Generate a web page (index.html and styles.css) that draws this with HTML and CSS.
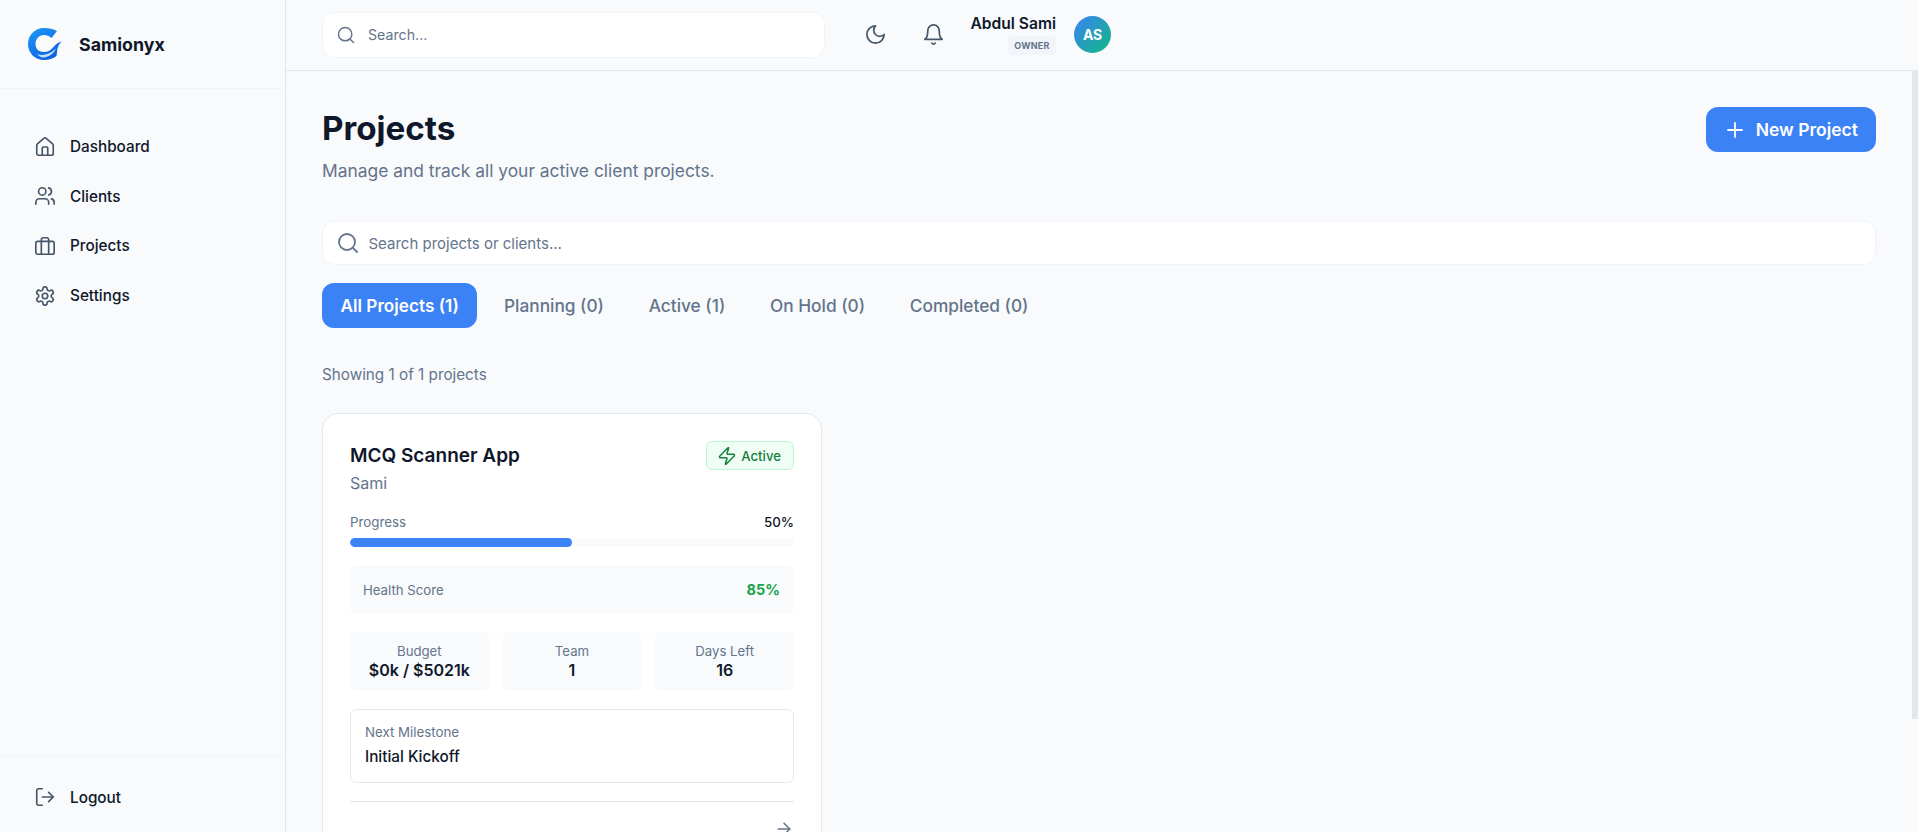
FILE: index.html
```html
<!DOCTYPE html>
<html lang="en">
<head>
    <meta charset="UTF-8">
    <title>Projects</title>
    <link rel="stylesheet" href="styles.css">
</head>
<body>
<div class="app">

    <aside class="sidebar">
        <div class="sidebar__brand">
            <svg class="sidebar__logo" viewBox="0 0 34 32" width="34" height="32">
                <defs>
                    <linearGradient id="logoGrad" x1="0" y1="0" x2="0.7" y2="1">
                        <stop offset="0" stop-color="#1e9bf5"/>
                        <stop offset="1" stop-color="#0b5fe0"/>
                    </linearGradient>
                </defs>
                <path fill="url(#logoGrad)" d="M16 0C21 0 25.500 1 29 3L23.500 10C21.500 8 19 7 16 7C11 7 7.500 11 7.500 16C7.500 21 11 24 15.500 24C20 24 23 22 25.500 19C28 16 30.500 14 34 13.500C31.500 15.500 30 18 29.500 20.500L28.500 28C25 30.500 21 32 16 32C7 32 0 25 0 16C0 7 7 0 16 0Z"/>
                <path fill="#bfe0fb" d="M9 26C15 28.500 22 26 28 20.500C25.500 26 20.500 29.500 15 29.500C13 29.500 11 28 9 26Z"/>
            </svg>
            <span class="sidebar__name">Samionyx</span>
        </div>

        <nav class="sidebar__nav">
            <a class="sidebar__link" href="#">
                <svg class="icon" viewBox="0 0 24 24"><path d="M15 21v-8a1 1 0 0 0-1-1h-4a1 1 0 0 0-1 1v8"/><path d="M3 10a2 2 0 0 1 .709-1.528l7-5.999a2 2 0 0 1 2.582 0l7 5.999A2 2 0 0 1 21 10v9a2 2 0 0 1-2 2H5a2 2 0 0 1-2-2z"/></svg>
                Dashboard
            </a>
            <a class="sidebar__link" href="#">
                <svg class="icon" viewBox="0 0 24 24"><path d="M16 21v-2a4 4 0 0 0-4-4H6a4 4 0 0 0-4 4v2"/><circle cx="9" cy="7" r="4"/><path d="M22 21v-2a4 4 0 0 0-3-3.870"/><path d="M16 3.130a4 4 0 0 1 0 7.750"/></svg>
                Clients
            </a>
            <a class="sidebar__link" href="#">
                <svg class="icon" viewBox="0 0 24 24"><rect x="2" y="7" width="20" height="14" rx="2"/><path d="M16 21V5a2 2 0 0 0-2-2h-4a2 2 0 0 0-2 2v16"/></svg>
                Projects
            </a>
            <a class="sidebar__link" href="#">
                <svg class="icon" viewBox="0 0 24 24"><path d="M12.220 2h-.440a2 2 0 0 0-2 2v.180a2 2 0 0 1-1 1.730l-.430.250a2 2 0 0 1-2 0l-.150-.080a2 2 0 0 0-2.730.730l-.220.380a2 2 0 0 0 .730 2.730l.150.100a2 2 0 0 1 1 1.720v.510a2 2 0 0 1-1 1.740l-.150.090a2 2 0 0 0-.730 2.730l.220.380a2 2 0 0 0 2.730.730l.150-.080a2 2 0 0 1 2 0l.430.250a2 2 0 0 1 1 1.730V20a2 2 0 0 0 2 2h.440a2 2 0 0 0 2-2v-.180a2 2 0 0 1 1-1.730l.430-.250a2 2 0 0 1 2 0l.150.080a2 2 0 0 0 2.730-.730l.220-.390a2 2 0 0 0-.730-2.730l-.150-.080a2 2 0 0 1-1-1.740v-.500a2 2 0 0 1 1-1.740l.150-.090a2 2 0 0 0 .730-2.730l-.220-.380a2 2 0 0 0-2.730-.730l-.150.080a2 2 0 0 1-2 0l-.430-.250a2 2 0 0 1-1-1.730V4a2 2 0 0 0-2-2z"/><circle cx="12" cy="12" r="3"/></svg>
                Settings
            </a>
        </nav>

        <div class="sidebar__footer">
            <a class="sidebar__link" href="#">
                <svg class="icon" viewBox="0 0 24 24"><path d="M9 21H5a2 2 0 0 1-2-2V5a2 2 0 0 1 2-2h4"/><path d="M16 17l5-5-5-5"/><path d="M21 12H9"/></svg>
                Logout
            </a>
        </div>
    </aside>

    <div class="content">
        <header class="topbar">
            <label class="searchbox searchbox--top">
                <svg class="icon" viewBox="0 0 24 24"><circle cx="11" cy="11" r="8"/><path d="M21 21l-4.300-4.300"/></svg>
                <input class="searchbox__input" type="text" placeholder="Search...">
            </label>

            <button class="topbar__btn" type="button">
                <svg class="icon" viewBox="0 0 24 24"><path d="M12 3a6 6 0 0 0 9 9 9 9 0 1 1-9-9Z"/></svg>
            </button>
            <button class="topbar__btn" type="button">
                <svg class="icon" viewBox="0 0 24 24"><path d="M6 8a6 6 0 0 1 12 0c0 7 3 9 3 9H3s3-2 3-9"/><path d="M10.300 21a1.940 1.940 0 0 0 3.400 0"/></svg>
            </button>

            <div class="user">
                <div class="user__info">
                    <span class="user__name">Abdul Sami</span>
                    <span class="user__role">OWNER</span>
                </div>
                <div class="user__avatar">AS</div>
            </div>
        </header>

        <main class="main">
            <div class="page-head">
                <div>
                    <h1 class="page-head__title">Projects</h1>
                    <p class="page-head__sub">Manage and track all your active client projects.</p>
                </div>
                <button class="page-head__btn" type="button">
                    <svg class="icon" viewBox="0 0 24 24"><path d="M5 12h14"/><path d="M12 5v14"/></svg>
                    New Project
                </button>
            </div>

            <label class="searchbox searchbox--main">
                <svg class="icon" viewBox="0 0 24 24"><circle cx="11" cy="11" r="8"/><path d="M21 21l-4.300-4.300"/></svg>
                <input class="searchbox__input" type="text" placeholder="Search projects or clients...">
            </label>

            <div class="tabs">
                <button class="tabs__item tabs__item--active" type="button">All Projects (1)</button>
                <button class="tabs__item" type="button">Planning (0)</button>
                <button class="tabs__item" type="button">Active (1)</button>
                <button class="tabs__item" type="button">On Hold (0)</button>
                <button class="tabs__item" type="button">Completed (0)</button>
            </div>

            <p class="showing">Showing 1 of 1 projects</p>

            <div class="cards">
                <article class="card">
                    <div class="card__head">
                        <div>
                            <h3 class="card__title">MCQ Scanner App</h3>
                            <p class="card__client">Sami</p>
                        </div>
                        <span class="card__status">
                            <svg class="icon" viewBox="0 0 24 24"><path d="M4 14a1 1 0 0 1-.780-1.630l9.900-10.200a.5.500 0 0 1 .860.460l-1.920 6.020A1 1 0 0 0 13 10h7a1 1 0 0 1 .780 1.630l-9.900 10.200a.5.500 0 0 1-.860-.460l1.920-6.020A1 1 0 0 0 11 14z"/></svg>
                            Active
                        </span>
                    </div>

                    <div class="progress">
                        <div class="progress__row">
                            <span class="progress__label">Progress</span>
                            <span class="progress__value">50%</span>
                        </div>
                        <div class="progress__track">
                            <div class="progress__fill" style="width: 50%"></div>
                        </div>
                    </div>

                    <div class="health">
                        <span class="health__label">Health Score</span>
                        <span class="health__value">85%</span>
                    </div>

                    <div class="stats">
                        <div class="stats__item">
                            <span class="stats__label">Budget</span>
                            <span class="stats__value">$0k / $5021k</span>
                        </div>
                        <div class="stats__item">
                            <span class="stats__label">Team</span>
                            <span class="stats__value">1</span>
                        </div>
                        <div class="stats__item">
                            <span class="stats__label">Days Left</span>
                            <span class="stats__value">16</span>
                        </div>
                    </div>

                    <div class="milestone">
                        <span class="milestone__label">Next Milestone</span>
                        <span class="milestone__value">Initial Kickoff</span>
                    </div>

                    <div class="card__foot">
                        <svg class="icon" viewBox="0 0 24 24"><path d="M5 12h14"/><path d="M12 5l7 7-7 7"/></svg>
                    </div>
                </article>
            </div>
        </main>

        <div class="scroll-thumb"></div>
    </div>

</div>
</body>
</html>
```

FILE: styles.css
```css
* {
    box-sizing: border-box;
}

html, body {
    height: 100%;
}

body {
    margin: 0;
    overflow: hidden;
    background-color: #f8fafc;
    color: #0f172a;
    font-family: Inter, "Noto Sans", sans-serif;
}

.app {
    display: flex;
    height: 100%;
}

.icon {
    display: block;
    flex: none;
    width: 20px;
    height: 20px;
    fill: none;
    stroke: currentColor;
    stroke-width: 1.8;
    stroke-linecap: round;
    stroke-linejoin: round;
}

/* sidebar */

.sidebar {
    display: flex;
    flex-direction: column;
    flex: none;
    width: 286px;
    border-right: 1px solid #e2e8f0;
}
.sidebar__brand {
    display: flex;
    align-items: center;
    gap: 17px;
    height: 89px;
    padding: 0 28px;
    border-bottom: 1px solid #f1f5f9;
}
.sidebar__logo {
    display: block;
    flex: none;
}
.sidebar__name {
    font-size: 17.800px;
    font-weight: 700;
}
.sidebar__nav {
    display: flex;
    flex-direction: column;
    flex: 1;
    gap: 9.700px;
    padding: 37.500px 21px 0;
}
.sidebar__link {
    display: flex;
    align-items: center;
    gap: 14px;
    height: 40px;
    padding: 0 13px;
    color: #0f172a;
    font-size: 15.300px;
    font-weight: 450;
    text-decoration: none;
}
.sidebar__link .icon {
    width: 22px;
    height: 22px;
    color: #475569;
}
.sidebar__footer {
    height: 76px;
    padding: 20px 21px 0;
    border-top: 1px solid #f1f5f9;
}

/* top bar */

.content {
    position: relative;
    display: flex;
    flex-direction: column;
    flex: 1;
    min-width: 0;
}
.topbar {
    display: flex;
    align-items: center;
    flex: none;
    height: 71px;
    padding: 0 36px 1px;
    border-bottom: 1px solid #e2e8f0;
}
.topbar__btn {
    display: flex;
    align-items: center;
    justify-content: center;
    width: 40px;
    height: 40px;
    margin-right: 18.500px;
    padding: 0;
    background: none;
    border: 0;
    color: #475569;
}
.topbar__btn .icon {
    width: 23px;
    height: 23px;
}
.user {
    display: flex;
    align-items: center;
    gap: 18px;
    margin-left: -1.500px;
}
.user__info {
    display: flex;
    flex-direction: column;
    align-items: flex-end;
    gap: 3px;
}
.user__name {
    font-size: 15.600px;
    font-weight: 600;
    line-height: 18px;
}
.user__role {
    height: 19px;
    padding: 0 6.500px;
    background-color: #f1f5f9;
    border-radius: 4px;
    color: #64748b;
    font-size: 9px;
    font-weight: 700;
    letter-spacing: 0.2px;
    line-height: 19px;
}
.user__avatar {
    display: flex;
    align-items: center;
    justify-content: center;
    width: 37px;
    height: 37px;
    background: linear-gradient(135deg, #3b82f6, #10b981);
    border-radius: 50%;
    color: #fff;
    font-size: 14px;
    font-weight: 700;
}

/* search boxes */

.searchbox {
    display: flex;
    align-items: center;
    background-color: #fff;
    border: 1px solid #f1f5f9;
    border-radius: 12px;
    color: #64748b;
}
.searchbox--top {
    gap: 12px;
    width: 503px;
    height: 46px;
    margin-right: 30px;
    padding: 0 13px;
}
.searchbox--top .searchbox__input {
    font-size: 14.200px;
}
.searchbox--main {
    gap: 8.500px;
    height: 44px;
    margin-bottom: 18px;
    padding: 0 13px;
}
.searchbox--main .icon {
    width: 24px;
    height: 24px;
}
.searchbox__input {
    flex: 1;
    min-width: 0;
    padding: 0;
    background: none;
    border: 0;
    color: #0f172a;
    font-family: inherit;
    font-size: 15px;
}
.searchbox__input::placeholder {
    color: #64748b;
    opacity: 1;
}
.searchbox__input:focus {
    outline: none;
}

/* main area */

.main {
    flex: 1;
    min-height: 0;
    overflow: hidden;
    padding: 36px 42px 36px 36px;
}
.scroll-thumb {
    position: absolute;
    top: 71px;
    right: 0;
    width: 6px;
    height: 648px;
    background-color: #e2e8f0;
}
.page-head {
    display: flex;
    align-items: flex-start;
    justify-content: space-between;
    margin-bottom: 38px;
}
.page-head__title {
    margin: 0 0 10px;
    font-size: 33.200px;
    font-weight: 700;
    line-height: 42px;
}
.page-head__sub {
    margin: 0;
    color: #64748b;
    font-size: 17.400px;
    line-height: 24px;
}
.page-head__btn {
    display: flex;
    align-items: center;
    gap: 9px;
    height: 45px;
    padding: 0 18px 0 17px;
    background-color: #3b82f6;
    border: 0;
    border-radius: 12px;
    color: #fff;
    font-family: inherit;
    font-size: 17.500px;
    font-weight: 600;
}
.page-head__btn .icon {
    width: 24px;
    height: 24px;
}

.tabs {
    display: flex;
    gap: 8.700px;
    margin-bottom: 37px;
}
.tabs__item {
    height: 45px;
    padding: 0 18px;
    background: none;
    border: 0;
    border-radius: 12px;
    color: #64748b;
    font-family: inherit;
    font-size: 17.300px;
    font-weight: 500;
}
.tabs__item--active {
    padding: 0 18.500px;
    background-color: #3b82f6;
    color: #fff;
    font-size: 17.200px;
    font-weight: 600;
}
.showing {
    margin: 0 0 28px;
    color: #64748b;
    font-size: 15.250px;
    line-height: 20px;
}

/* project card */

.cards {
    display: grid;
    grid-template-columns: 500px;
}
.card {
    padding: 27px;
    background-color: #fff;
    border: 1px solid #e2e8f0;
    border-radius: 16px;
}
.card__head {
    display: flex;
    align-items: flex-start;
    justify-content: space-between;
    margin-bottom: 19px;
}
.card__title {
    margin: 0 0 1px;
    font-size: 19px;
    font-weight: 600;
    line-height: 30px;
}
.card__client {
    margin: 0;
    color: #64748b;
    font-size: 16px;
    line-height: 22px;
}
.card__status {
    display: flex;
    align-items: center;
    gap: 4px;
    height: 29px;
    padding: 0 12px 0 10px;
    background-color: #f0fdf4;
    border: 1px solid #bbf7d0;
    border-radius: 6px;
    color: #15803d;
    font-size: 13.200px;
    font-weight: 500;
}

.progress {
    margin-bottom: 18px;
}
.progress__row {
    display: flex;
    justify-content: space-between;
    margin-bottom: 7px;
    font-size: 13.300px;
    line-height: 18px;
}
.progress__label {
    color: #64748b;
}
.progress__value {
    font-weight: 500;
}
.progress__track {
    height: 9px;
    background-color: #f8fafc;
    border-radius: 5px;
    overflow: hidden;
}
.progress__fill {
    height: 100%;
    background-color: #3b82f6;
    border-radius: 5px;
}

.health {
    display: flex;
    align-items: center;
    justify-content: space-between;
    height: 49px;
    margin-bottom: 18px;
    padding: 0 14px 0 13px;
    background-color: #f8fafc;
    border-radius: 6px;
}
.health__label {
    color: #64748b;
    font-size: 13.200px;
}
.health__value {
    color: #16a34a;
    font-size: 14.500px;
    font-weight: 700;
}

.stats {
    display: grid;
    grid-template-columns: repeat(3, 1fr);
    gap: 14px;
    margin-bottom: 18px;
}
.stats__item {
    display: flex;
    flex-direction: column;
    align-items: center;
    justify-content: center;
    height: 59px;
    padding-bottom: 2px;
    background-color: #f8fafc;
    border-radius: 6px;
}
.stats__label {
    color: #64748b;
    font-size: 13.200px;
    line-height: 18px;
}
.stats__value {
    font-size: 16px;
    font-weight: 600;
    line-height: 20px;
}

.milestone {
    display: flex;
    flex-direction: column;
    justify-content: center;
    gap: 6px;
    height: 74px;
    margin-bottom: 18px;
    padding: 0 14px 2px;
    border: 1px solid #e2e8f0;
    border-radius: 6px;
}
.milestone__label {
    color: #64748b;
    font-size: 13.300px;
    line-height: 18px;
}
.milestone__value {
    font-size: 15.300px;
    font-weight: 500;
    line-height: 20px;
}

.card__foot {
    display: flex;
    justify-content: flex-end;
    padding-top: 17px;
    border-top: 1px solid #e2e8f0;
    color: #64748b;
}
```
